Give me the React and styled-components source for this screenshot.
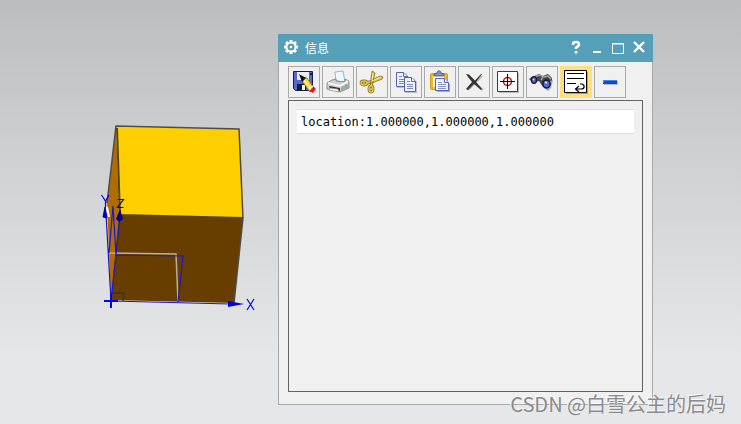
import React from "react";
import styled, { createGlobalStyle } from "styled-components";

const GlobalStyle = createGlobalStyle`
  *, *::before, *::after { box-sizing: border-box; }
  body { margin: 0; }
`;

const Viewport = styled.main`
  position: relative;
  display: flex;
  gap: 20px;
  min-height: 100vh;
  padding: 34px 88px 19px 103px;
  background: linear-gradient(#bcbdbe 0%, #cfd0d1 37%, #e5e6e8 83%, #e6e7e8 100%);
  font-family: "Liberation Sans", "Noto Sans CJK SC", sans-serif;
`;

const Model = styled.svg`
  flex: none;
  width: 155px;
  height: 195px;
  margin-top: 86px;
`;

const Dialog = styled.section`
  flex: 1;
  min-width: 0;
  display: flex;
  flex-direction: column;
  background: #f0f0f0;
  border: 1px solid #a7a8a8;
  border-top: 0;
`;

const TitleBar = styled.header`
  display: flex;
  align-items: center;
  height: 28px;
  margin: 0 -1px;
  padding: 0 4px 2px 5px;
  background: #559fb9;
  color: #fff;
`;

const Title = styled.h1`
  flex: 1;
  margin: 2px 0 0 6px;
  font: 12px/26px "Noto Sans CJK SC", sans-serif;
`;

const WindowButton = styled.button`
  display: grid;
  place-items: center;
  width: 21px;
  height: 20px;
  padding: 0;
  border: 0;
  background: none;
  color: inherit;
`;

const Toolbar = styled.div`
  display: flex;
  flex-wrap: wrap;
  gap: 2px;
  padding: 4px 9px 2px;
`;

const ToolButton = styled.button`
  display: grid;
  place-items: center;
  width: 32px;
  height: 32px;
  padding: 0;
  border: 1px solid ${(p) => (p.$active ? "#ffe07a" : "#a9a9a9")};
  background: ${(p) => (p.$active ? "#ffe07a" : "#f0f0f0")};
`;

const ToolIcon = styled.svg`
  display: block;
  width: 28px;
  height: 28px;
`;

const Output = styled.div`
  flex: 1;
  margin: 0 9px 12px;
  padding: 8px;
  border: 1px solid #646464;
`;

const OutputLine = styled.input`
  display: block;
  width: 100%;
  height: 25px;
  padding: 0 4px;
  border: solid #dedede;
  border-width: 1px 0;
  background: #fff;
  color: #000;
  font: 12px "DejaVu Sans Mono", monospace;
  outline: none;
`;

const Watermark = styled.div`
  position: absolute;
  right: 15px;
  bottom: 6px;
  color: #898b8e;
  font: 20px/28px "Noto Sans CJK SC", sans-serif;
  text-shadow: -1px -1px 0 #fafafa;
  white-space: nowrap;
`;

const icons = [
  {
    label: "Save",
    art: (
      <>
        <path d="M3.500 3.500h19v19h-17l-2-2z" fill="#5467cb" stroke="#151c50" />
        <path d="M7 4h12v8H7z" fill="#e9eef5" />
        <path d="M20 5h2v2h-2z" fill="#111b60" />
        <path d="M7 16h9v7H7z" fill="#111d38" />
        <path d="M12 17h3v5h-3z" fill="#f5f5f5" />
        <path d="M12 9l5 1 7 10-4 4-8-11z" fill="#ffd42c" stroke="#8d5b00" strokeWidth=".7" />
        <path d="M14 12l7 9" stroke="#fff49b" strokeWidth="1.500" />
        <path d="M9 6l7 4-4 4z" fill="#111" />
        <path d="M23 18l3 3-3 4-4-2z" fill="#dc2020" />
        <path d="M23 18l-4 4" stroke="#eee" strokeWidth="1.500" />
      </>
    ),
  },
  {
    label: "Print",
    art: (
      <>
        <path d="M11 4l8-1 2 11-9-1z" fill="#edf7ff" stroke="#82a4c0" strokeWidth=".8" />
        <path d="M3 15l5-3 4-1v2l9 1v-3l4 2v7l-9 4-13-3z" fill="#cfd1d2" stroke="#777" strokeWidth=".8" />
        <path d="M4 15l12 3 8-5" stroke="#fff" fill="none" strokeWidth="1.500" />
        <path d="M5 18l11 2v3L6 21z" fill="#333" />
        <path d="M6 20l8 1 1 3-10-2z" fill="#f8f8f8" stroke="#777" strokeWidth=".5" />
        <path d="M17 19v5l8-4v-4z" fill="#a5a8aa" />
        <path d="M21 17h2" stroke="#63ad55" />
      </>
    ),
  },
  {
    label: "Cut",
    art: (
      <>
        <g fill="none" stroke="#806b12" strokeWidth="2.800">
          <ellipse cx="6" cy="15" rx="3" ry="2" />
          <ellipse cx="13" cy="21" rx="2" ry="3" />
        </g>
        <path d="M8 14l6-2 8-4 3 1-1 2-10 4-5 1zM12 19l1-8 1-8 3 2-2 9-1 5z" fill="#e6c947" stroke="#806b12" strokeWidth=".8" />
        <g fill="none" stroke="#e6c947" strokeWidth="1.400">
          <ellipse cx="6" cy="15" rx="3" ry="2" />
          <ellipse cx="13" cy="21" rx="2" ry="3" />
        </g>
        <path d="M15 5l-1 8 9-4" fill="none" stroke="#fff2a0" strokeWidth=".8" />
      </>
    ),
  },
  {
    label: "Copy",
    art: (
      <>
        {[[4, 4], [12, 9]].map(([x, y]) => (
          <g key={x} transform={`translate(${x} ${y})`}>
            <path d="M1 1h9l3 4v11H1z" fill="#909090" opacity=".5" />
            <path d="M.5.5h7l4 4v10H.5z" fill="#edf4ff" stroke="#5261bc" />
            <path d="M7.500.5v4h4" fill="#fff" stroke="#5261bc" />
            <path d="M3 4.500h3M3 7.500h6M3 9.500h6M3 11.500h6" stroke="#7c88bd" />
          </g>
        ))}
      </>
    ),
  },
  {
    label: "Paste",
    art: (
      <>
        <rect x="4.500" y="5.500" width="17" height="16" rx="1" fill="#efb82d" stroke="#d19922" />
        <path d="M7 8h11v11H7z" fill="#fffbdc" />
        <path d="M8 8V6l3-1c0-3 4-3 4 0l3 1v2z" fill="#8790a8" stroke="#4b536c" strokeWidth=".8" />
        <path d="M11 12h9l4 4v8H11z" fill="#aaa" />
        <path d="M9.500 10.500h9l4 4v8h-13z" fill="#edf4ff" stroke="#5261bc" />
        <path d="M18.500 10.500v4h4" fill="#fff" stroke="#5261bc" />
        <path d="M12 14.500h4M12 16.500h8M12 18.500h8M12 20.500h8" stroke="#8995c8" />
      </>
    ),
  },
  {
    label: "Delete",
    art: (
      <>
        <path d="M8 8l15 14M8 22L22 8" stroke="#bbb" strokeWidth="2" />
        <path d="M6 6l3 .5 6 6L21 6h1l-6 8 6 7-1 1-7-6-6 6-2-1 6-7z" fill="#343434" />
      </>
    ),
  },
  {
    label: "Target",
    art: (
      <>
        <path d="M5 5h20v20H5z" fill="#bbb" />
        <path d="M3.500 3.500h20v20h-20z" fill="#fff" stroke="#c90000" />
        <circle cx="13.500" cy="13.500" r="4" fill="none" stroke="#c90000" strokeWidth="1.400" />
        <path d="M6 13.500h15M13.500 6v15" stroke="#000" />
      </>
    ),
  },
  {
    label: "Find",
    art: (
      <>
        <path d="M4 9l7-3 4 2 5-2 4 4 0 5-3 5-6-1-4-6-6 2-4-4z" fill="#454749" />
        <path d="M16 20l5-3 1-4 3-1-2 8-3 3z" fill="#a8a8a8" />
        <path d="M6 9l6-2 3 2-2 3M16 9l4-1 3 3" fill="none" stroke="#a5a9ac" strokeWidth="1.500" />
        <ellipse cx="6" cy="12" rx="2.500" ry="3.300" fill="#5868d2" stroke="#15182b" strokeWidth="1.300" />
        <ellipse cx="18.500" cy="16" rx="3.600" ry="4" fill="#5369e8" stroke="#15182b" strokeWidth="1.500" />
        <path d="M5 11l1 1M17 14l2 1" stroke="#dce5ff" strokeWidth="1.500" />
      </>
    ),
  },
  {
    label: "Word wrap",
    active: true,
    art: (
      <>
        <path d="M4 4h22v22H4z" fill="#aaa17c" />
        <path d="M2.500 2.500h22v22h-22z" fill="#fff" stroke="#000" />
        <path d="M5 5.500h17M5 10.500h17M5 15.500h9" stroke="#000" />
        <path d="M18 16h2c3 1 3 5-1 5h-5M17 18l-3.500 3L17 24" fill="none" stroke="#000" strokeWidth="1.200" />
      </>
    ),
  },
  {
    label: "Collapse",
    art: (
      <>
        <path d="M8 13h14v4H8z" fill="#b9b9b9" />
        <path d="M7 12h14v4H7z" fill="#1847c7" />
        <path d="M7 12h14v1H8v2H7z" fill="#3986f2" />
      </>
    ),
  },
];

function Cube() {
  return (
    <Model viewBox="103 120 155 195" overflow="visible" role="img" aria-label="Cube with coordinate axes">
      <path d="M116 127L120 215 111 300 107 203z" fill="#b26b00" />
      <path d="M119 215L243 218 234 303 111 300z" fill="#673e00" />
      <path d="M116 127L239 129 243 218 119 215z" fill="#ffcf00" />
      <path d="M107 203L116 126 239 129 243 218 234 303" fill="none" stroke="#4c4d48" strokeWidth="1.500" />
      <path d="M117 128L120 215 243 218" fill="none" stroke="#514518" strokeWidth="2" />
      <path d="M111 293h13l-1 8" fill="none" stroke="#272b2a" />
      <path d="M109 253L176 254 178 301" fill="none" stroke="#b8aea1" strokeWidth="1.500" />
      <path d="M107 207l2 10" stroke="#fff" strokeWidth="2" />
      <path d="M106 214L111 301 120 217M109 253L113 206 116 255L183 256 178 302M111 301L230 304" fill="none" stroke="#1818c8" strokeWidth="1.200" />
      <path d="M104 301h14M111 294v14" stroke="#0000ff" strokeWidth="2" />
      <path d="M228 301L244 304 228 307z" fill="#0000d8" />
      <path d="M105 207L103 217 107 218z" fill="#0000b8" stroke="#0000b8" />
      <path d="M120 209L116 219 119 222 123 219z" fill="#000098" />
      <path d="M247 299L254 310M254 299L247 310" stroke="#0000ff" strokeWidth="1.200" />
      <path d="M101.500 195L105.500 201 109 195M105.500 201v6" fill="none" stroke="#0000ff" strokeWidth="1.200" />
      <path d="M117.500 199.500h6L117.500 207.500h6" fill="none" stroke="#0000c8" strokeWidth="1.200" />
    </Model>
  );
}

function GearIcon() {
  return (
    <svg width="16" height="16" viewBox="0 0 16 16" aria-hidden="true">
      <circle cx="8" cy="8" r="4.500" fill="none" stroke="#fff" strokeWidth="2" />
      <circle cx="8" cy="8" r="1.300" fill="#fff" />
      {[0, 45, 90, 135, 180, 225, 270, 315].map((angle) => (
        <path key={angle} d="M6.500 1h3v2.500h-3z" fill="#fff" transform={`rotate(${angle} 8 8)`} />
      ))}
    </svg>
  );
}

const windowIcons = [
  ["Help", <path d="M4 5V4Q4 2 7 2T10 4.500Q10 6 7 7.500V9M7 11v2.500" strokeWidth="2.500" />],
  ["Minimize", <path d="M3 12h8" />],
  ["Maximize", <path d="M1.500 3.500h11v10h-11zM1 4h12" strokeWidth="1" />],
  ["Close", <path d="M2 2l10 10M12 2L2 12" strokeWidth="2.400" />],
];

export default function App() {
  return (
    <>
      <GlobalStyle />
      <Viewport>
        <Cube />
        <Dialog aria-labelledby="dialog-title">
          <TitleBar>
            <GearIcon />
            <Title id="dialog-title">信息</Title>
            {windowIcons.map(([label, shape]) => (
              <WindowButton key={label} type="button" aria-label={label}>
                <svg width="14" height="14" viewBox="0 0 14 14" fill="none" stroke="#fff" strokeWidth="2">
                  {shape}
                </svg>
              </WindowButton>
            ))}
          </TitleBar>
          <Toolbar role="toolbar" aria-label="Information tools">
            {icons.map(({ label, art, active }) => (
              <ToolButton key={label} type="button" aria-label={label} aria-pressed={active} $active={active}>
                <ToolIcon viewBox="0 0 28 28" fill="none">{art}</ToolIcon>
              </ToolButton>
            ))}
          </Toolbar>
          <Output>
            <OutputLine readOnly aria-label="Output" value="location:1.000000,1.000000,1.000000" />
          </Output>
        </Dialog>
        <Watermark>CSDN @白雪公主的后妈</Watermark>
      </Viewport>
    </>
  );
}
